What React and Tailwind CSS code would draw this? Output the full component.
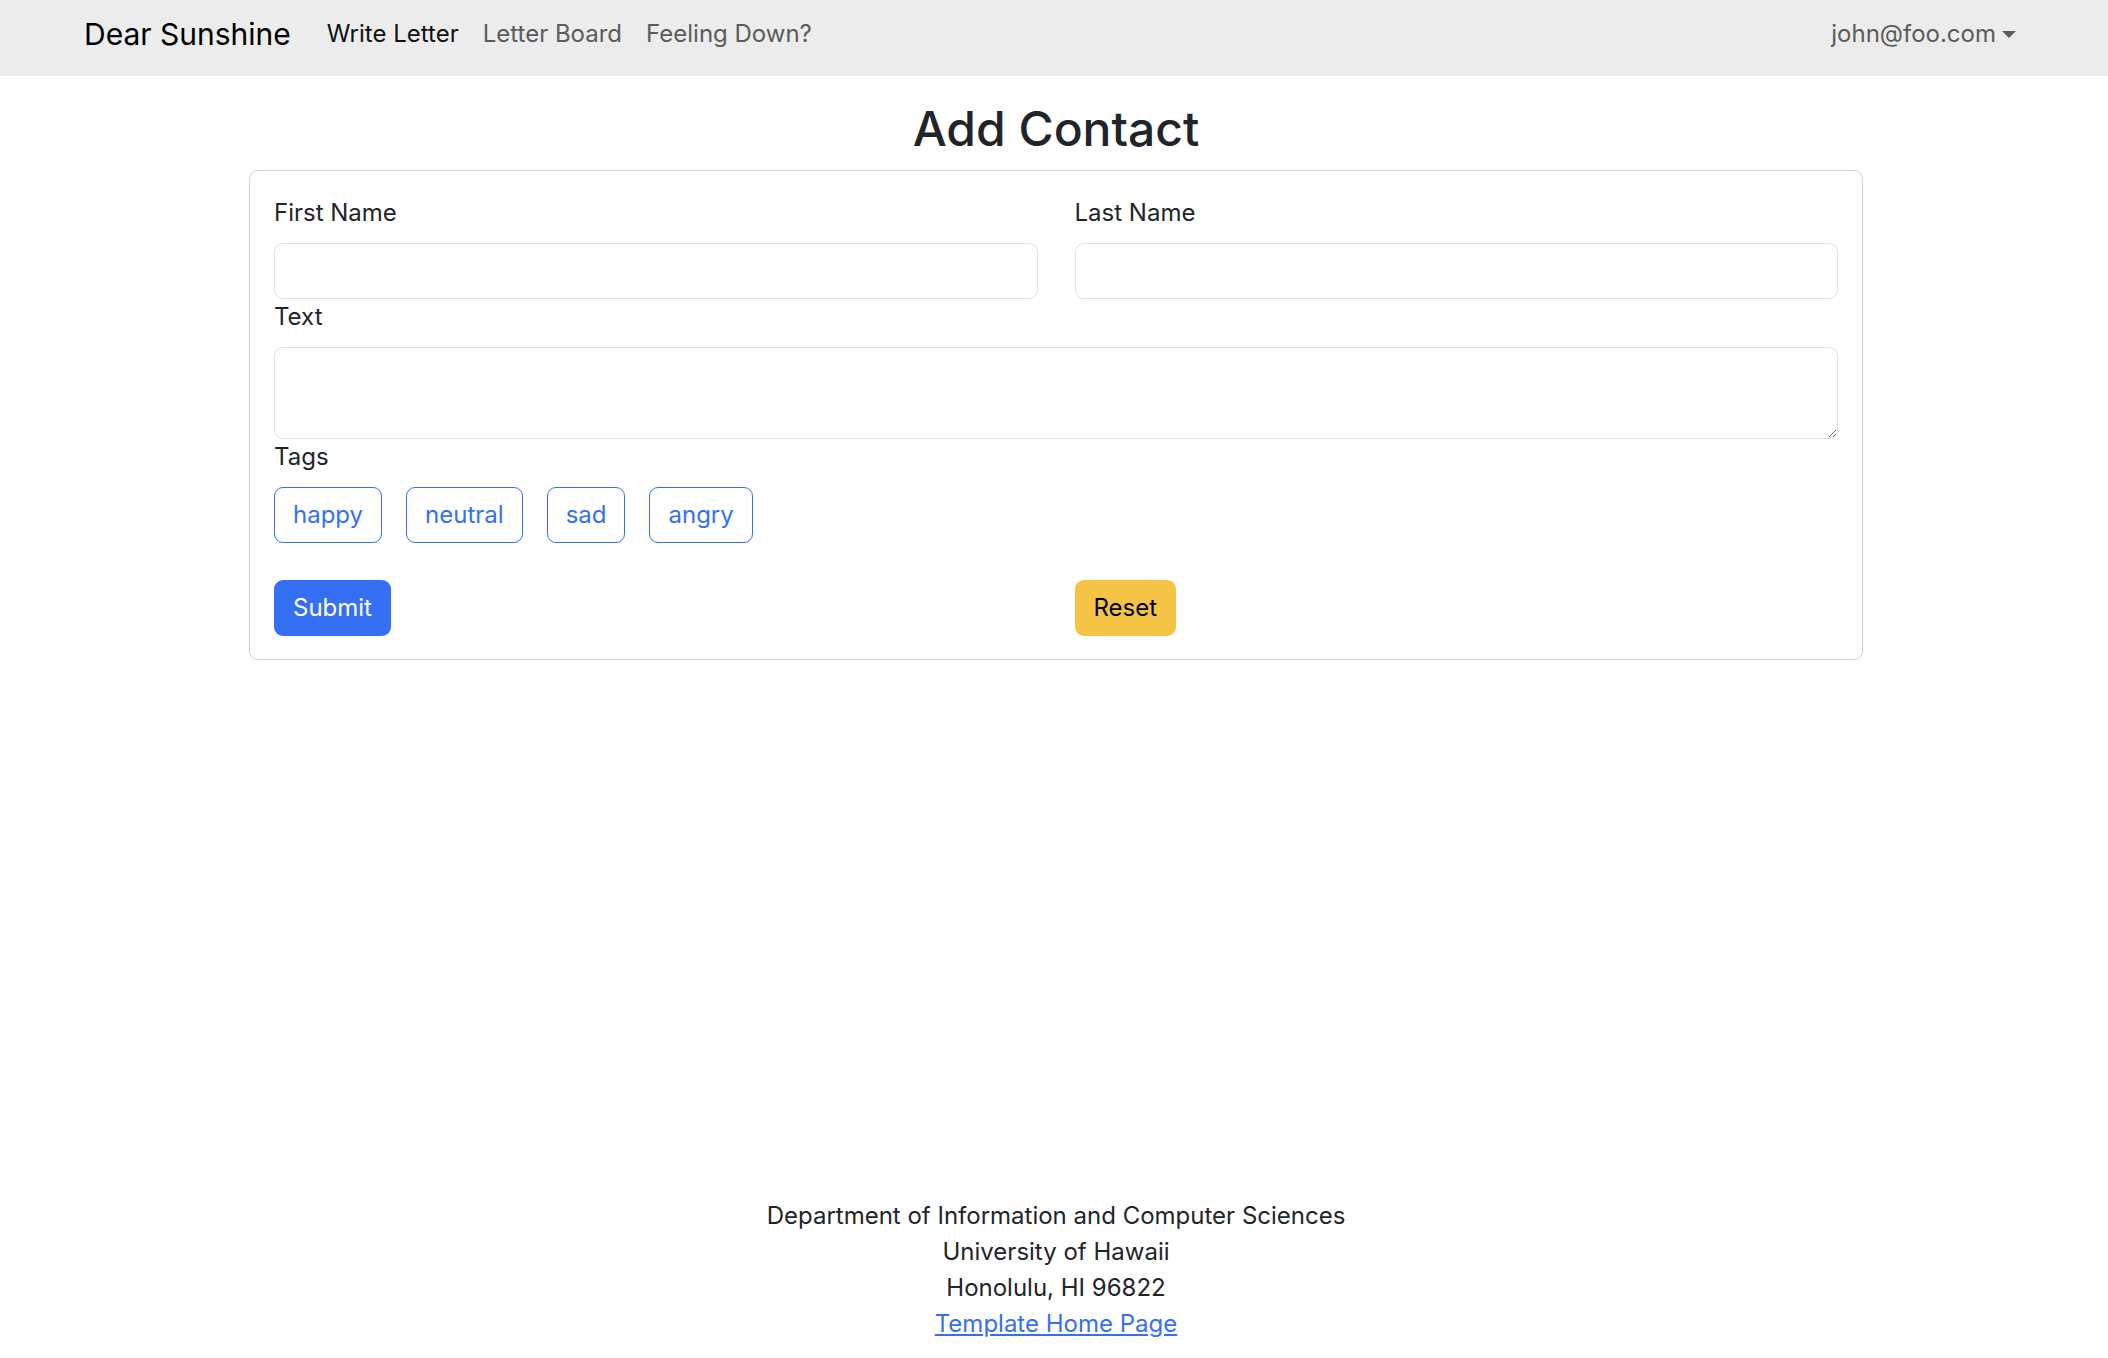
import React from 'react'

const tags = ['happy', 'neutral', 'sad', 'angry'];

const App = () => {
  return (
    <div className="min-h-screen flex flex-col bg-white pl-[4px] text-[#212529] font-['Inter','Liberation_Sans',sans-serif]">
      {/* Navbar */}
      <nav className="bg-[#ececec] h-[76px] -ml-[4px] pl-[4px]">
        <div className="w-[1980px] mx-auto px-[18px] h-full flex items-center pb-[8px]">
          <span className="text-[30px] leading-[45px] text-black mr-[24px]">Dear Sunshine</span>
          <div className="flex items-center text-[24px] leading-[36px]">
            <a className="px-[12px] text-[#111111]">Write Letter</a>
            <a className="px-[12px] text-[#5b5b5b]">Letter Board</a>
            <a className="px-[12px] text-[#5b5b5b]">Feeling Down?</a>
          </div>
          <div className="ml-auto flex items-center px-[12px] text-[24px] leading-[36px] text-[#5b5b5b]">
            <span>john@foo.com</span>
            <span className="ml-[6px] w-0 h-0 border-x-[7px] border-x-transparent border-t-[7px] border-t-[#5b5b5b]"></span>
          </div>
        </div>
      </nav>

      {/* Main */}
      <main className="pt-[24px]">
        <h2 className="text-center text-[48px] leading-[57.6px] font-medium mb-[12px]">Add Contact</h2>
        <div className="w-[1614px] mx-auto border border-[#d4d4d4] rounded-[9px] p-[24px] pb-[23px]">
          <div className="grid grid-cols-2 gap-x-[37px] text-[24px] leading-[36px]">
            <div>
              <label className="block mb-[12px]">First Name</label>
              <input type="text" className="block w-full h-[56px] border border-[#dee2e6] rounded-[9px] px-[18px] outline-none" />
            </div>
            <div>
              <label className="block mb-[12px]">Last Name</label>
              <input type="text" className="block w-full h-[56px] border border-[#dee2e6] rounded-[9px] px-[18px] outline-none" />
            </div>
          </div>

          <div className="text-[24px] leading-[36px]">
            <label className="block mb-[12px]">Text</label>
            <textarea className="block w-full h-[92px] border border-[#dee2e6] rounded-[9px] px-[18px] py-[9px] outline-none resize-y"></textarea>
          </div>

          <div className="text-[24px] leading-[36px]">
            <label className="block mb-[12px]">Tags</label>
            <div className="flex gap-[24px]">
              {tags.map((tag) => (
                <button key={tag} className="h-[56px] px-[18px] border border-[#3670f2] rounded-[9px] text-[#3670f2] bg-white">
                  {tag}
                </button>
              ))}
            </div>
          </div>

          <div className="grid grid-cols-2 gap-x-[37px] mt-[37px] text-[24px] leading-[36px]">
            <div>
              <button className="h-[56px] px-[19px] rounded-[9px] bg-[#356ff4] text-white">Submit</button>
            </div>
            <div>
              <button className="h-[56px] px-[19px] rounded-[9px] bg-[#f6c445] text-black">Reset</button>
            </div>
          </div>
        </div>
      </main>

      {/* Footer */}
      <footer className="mt-auto pb-[16px] text-center text-[24px] leading-[36px] text-[#212529]">
        <div>Department of Information and Computer Sciences</div>
        <div>University of Hawaii</div>
        <div>Honolulu, HI 96822</div>
        <div>
          <a href="#" className="text-[#3670f2] underline">Template Home Page</a>
        </div>
      </footer>
    </div>
  )
}

export default App
